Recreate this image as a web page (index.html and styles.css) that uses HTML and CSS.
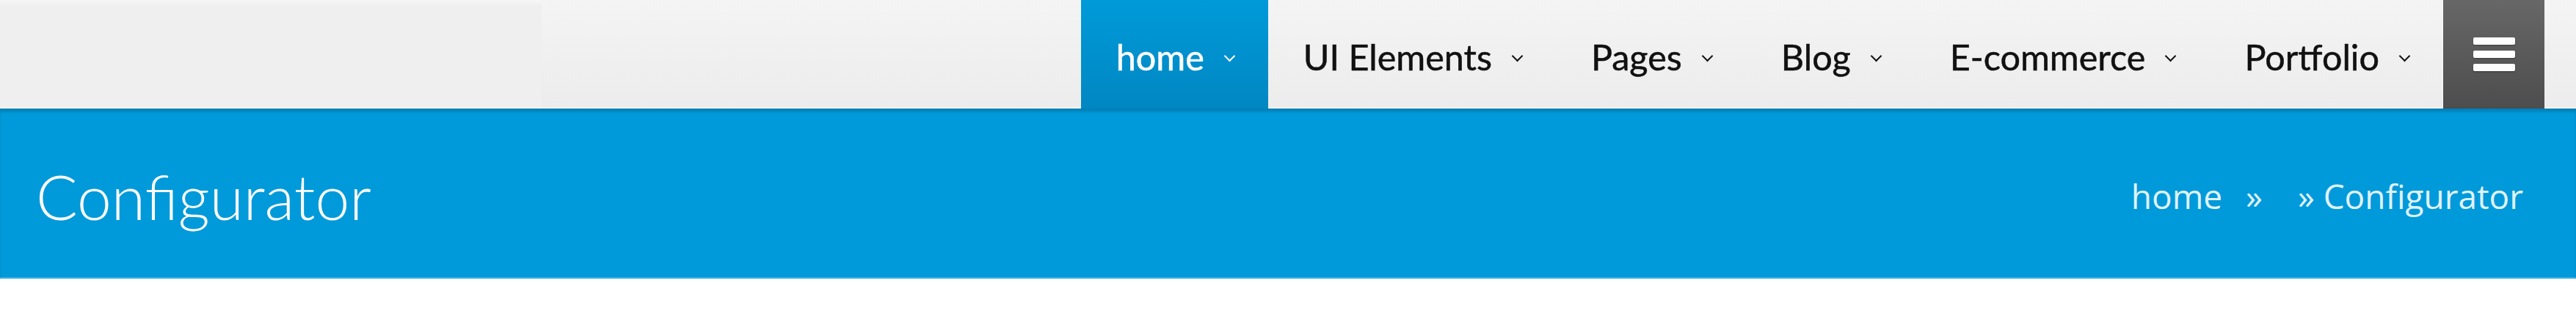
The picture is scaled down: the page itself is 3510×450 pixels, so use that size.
FILE: index.html
```html
<!DOCTYPE html>
<html lang="en">
<head>
<meta charset="utf-8">
<title>Configurator</title>
<link rel="stylesheet" href="styles.css">
</head>
<body>
<header class="header">
  <div class="brand-area"></div>
  <nav class="nav">
    <ul class="menu">
      <li class="menu-item active"><a href="#">home</a><span class="chev"></span></li>
      <li class="menu-item"><a href="#">UI Elements</a><span class="chev"></span></li>
      <li class="menu-item"><a href="#">Pages</a><span class="chev"></span></li>
      <li class="menu-item"><a href="#">Blog</a><span class="chev"></span></li>
      <li class="menu-item"><a href="#">E-commerce</a><span class="chev"></span></li>
      <li class="menu-item"><a href="#">Portfolio</a><span class="chev"></span></li>
    </ul>
    <button class="burger" aria-label="menu"><span></span><span></span><span></span></button>
  </nav>
</header>
<section class="page-title">
  <h1 class="title">Configurator</h1>
  <div class="crumbs">
    <a href="#" class="crumb-home">home</a>
    <span class="sep">»</span>
    <span class="current"><span class="sep2">»</span> Configurator</span>
  </div>
</section>
</body>
</html>
```

FILE: styles.css
```css
* { box-sizing: border-box; }
html, body { margin: 0; padding: 0; background: #fff; }
body { width: 3510px; height: 450px; overflow: hidden; }

.header {
  display: flex;
  height: 148px;
  background: #efefef;
  box-shadow: inset 0 -2px 0 #fbf4f3;
}
.brand-area {
  width: 738px;
  flex: none;
  background: linear-gradient(#f6f6f6 0, #efefef 8px, #efefef 100%);
  box-shadow: inset 0 -2px 0 #fbf4f3;
}
.nav {
  flex: 1;
  display: flex;
  justify-content: flex-end;
  padding-right: 43px;
  background: linear-gradient(#f4f4f4, #ececec);
  box-shadow: inset 0 -2px 0 #fbf4f3;
}
.menu {
  display: flex;
  margin: 0;
  padding: 0;
  list-style: none;
}
.menu-item {
  display: flex;
  align-items: center;
  padding: 5px 47px 0 48px;
  height: 148px;
  font-family: Lato, "Liberation Sans", sans-serif;
  font-size: 48.5px;
  color: #111;
  -webkit-text-stroke: 0.5px currentColor;
}
.menu-item a {
  color: inherit;
  text-decoration: none;
}
.chev {
  width: 11px;
  height: 11px;
  margin-left: 29px;
  margin-top: 0;
  border-right: 2.5px solid currentColor;
  border-bottom: 2.5px solid currentColor;
  transform: rotate(45deg);
}
.menu-item.active {
  background: linear-gradient(#009ad9, #0087c2);
  color: #fff;
}
.burger {
  width: 138px;
  height: 148px;
  border: 0;
  padding: 0;
  background: linear-gradient(#676767, #4d4d4d);
  display: flex;
  flex-direction: column;
  align-items: center;
  justify-content: center;
  gap: 8px;
  box-shadow: -1px 0 0 #fafafa;
}
.burger span {
  display: block;
  width: 57px;
  height: 10px;
  background: #fff;
  border-radius: 2px;
  box-shadow: 0 1px 2px rgba(0,0,0,0.35);
}

.page-title {
  display: flex;
  align-items: center;
  justify-content: space-between;
  height: 232px;
  padding: 0 72px 0 49px;
  background: #009ada;
  box-shadow: inset 0 5px 4px -1px rgba(0,70,110,0.35), inset 0 -2px 0 #3fb1e4;
}
.title {
  margin: 0;
  font-family: Lato, "Liberation Sans", sans-serif;
  font-weight: 300;
  font-size: 84px;
  color: #fff;
  line-height: 1;
  padding-top: 8px;
}
.crumbs {
  font-family: "Open Sans", "Liberation Sans", sans-serif;
  font-size: 46px;
  color: rgba(255,255,255,0.9);
  display: flex;
  align-items: baseline;
  padding-top: 6px;
}
.crumb-home { color: inherit; text-decoration: none; }
.sep { margin-left: 32px; }
.current { margin-left: 48px; }
```
